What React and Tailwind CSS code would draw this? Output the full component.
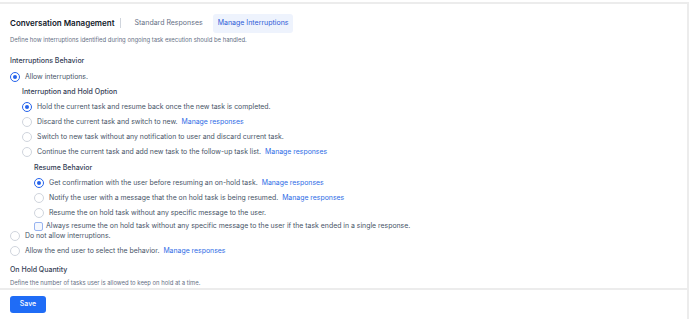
import React from "react";

function Radio({ checked }) {
  return (
    <span
      className={`flex h-[10px] w-[10px] shrink-0 items-center justify-center rounded-full border bg-white ${
        checked ? "border-[#2563eb]" : "border-[#d0d5dd]"
      }`}
    >
      {checked && <span className="h-[4px] w-[4px] rounded-full bg-[#2563eb]" />}
    </span>
  );
}

function Link({ children }) {
  return <span className="ml-[4px] text-[#2e6ce6]">{children}</span>;
}

function Option({ checked, children, link, className = "" }) {
  return (
    <div className={`flex h-[15px] items-center gap-[5px] ${className}`}>
      <Radio checked={checked} />
      <span className="whitespace-nowrap">
        {children}
        {link && <Link>Manage responses</Link>}
      </span>
    </div>
  );
}

export default function App() {
  return (
    <div
      className="flex h-[319px] w-[690px] flex-col overflow-hidden bg-white text-[6.9px] text-[#475467]"
      style={{ fontFamily: "Inter, 'Noto Sans', sans-serif" }}
    >
      <div className="mr-[1px] mt-[2px] flex flex-1 flex-col overflow-hidden border-r-2 border-t-2 border-[#ececec]">
        <div className="flex-1 px-[10px] pt-[10px]">
          <div className="flex items-center">
            <span className="text-[8px] font-semibold text-[#101828]">Conversation Management</span>
            <span className="mx-[5px] h-[10px] w-px bg-[#d0d5dd]" />
            <span className="px-[9px] text-[7px] text-[#667085]">Standard Responses</span>
            <span className="ml-[1px] rounded-[3px] bg-[#eef3fd] px-[5px] py-[4px] text-[7px] text-[#2e5bd7]">
              Manage Interruptions
            </span>
          </div>
          <div className="mt-[3px] text-[5.9px] text-[#667085]">
            Define how interruptions identified during ongoing task execution should be handled.
          </div>

          <div className="mt-[12px] text-[7px] font-medium text-[#344054]">Interruptions Behavior</div>
          <div className="mt-[3px]">
            <Option checked>Allow interruptions.</Option>
            <div className="pl-[12px]">
              <div className="flex h-[15px] items-center text-[7px] font-medium text-[#344054]">
                Interruption and Hold Option
              </div>
              <Option checked>Hold the current task and resume back once the new task is completed.</Option>
              <Option link>Discard the current task and switch to new.</Option>
              <Option>Switch to new task without any notification to user and discard current task.</Option>
              <Option link>Continue the current task and add new task to the follow-up task list.</Option>
              <div className="pl-[12px]">
                <div className="flex h-[16px] items-center text-[7px] font-medium text-[#344054]">
                  Resume Behavior
                </div>
                <Option checked link>Get confirmation with the user before resuming an on-hold task.</Option>
                <Option link>Notify the user with a message that the on hold task is being resumed.</Option>
                <Option>Resume the on hold task without any specific message to the user.</Option>
                <div className="flex h-[11px] items-center gap-[3px]">
                  <span className="h-[9px] w-[9px] shrink-0 rounded-[2px] border border-[#98b4f0] bg-[#f5f8fe]" />
                  <span className="whitespace-nowrap">
                    Always resume the on hold task without any specific message to the user if the task ended in a single response.
                  </span>
                </div>
              </div>
            </div>
            <Option className="-mt-[3px]">Do not allow interruptions.</Option>
            <Option link>Allow the end user to select the behavior.</Option>
          </div>

          <div className="mt-[6px] text-[7px] font-medium text-[#344054]">On Hold Quantity</div>
          <div className="mt-[4px] text-[5.9px] text-[#667085]">
            Define the number of tasks user is allowed to keep on hold at a time.
          </div>
        </div>
        <div className="h-[2px] bg-[#ececec]" />
        <div className="flex h-[29px] items-center px-[10px]">
          <button className="h-[17px] w-[36px] rounded-[3px] bg-[#1f6cf6] text-[7px] font-medium text-white">
            Save
          </button>
        </div>
      </div>
    </div>
  );
}
